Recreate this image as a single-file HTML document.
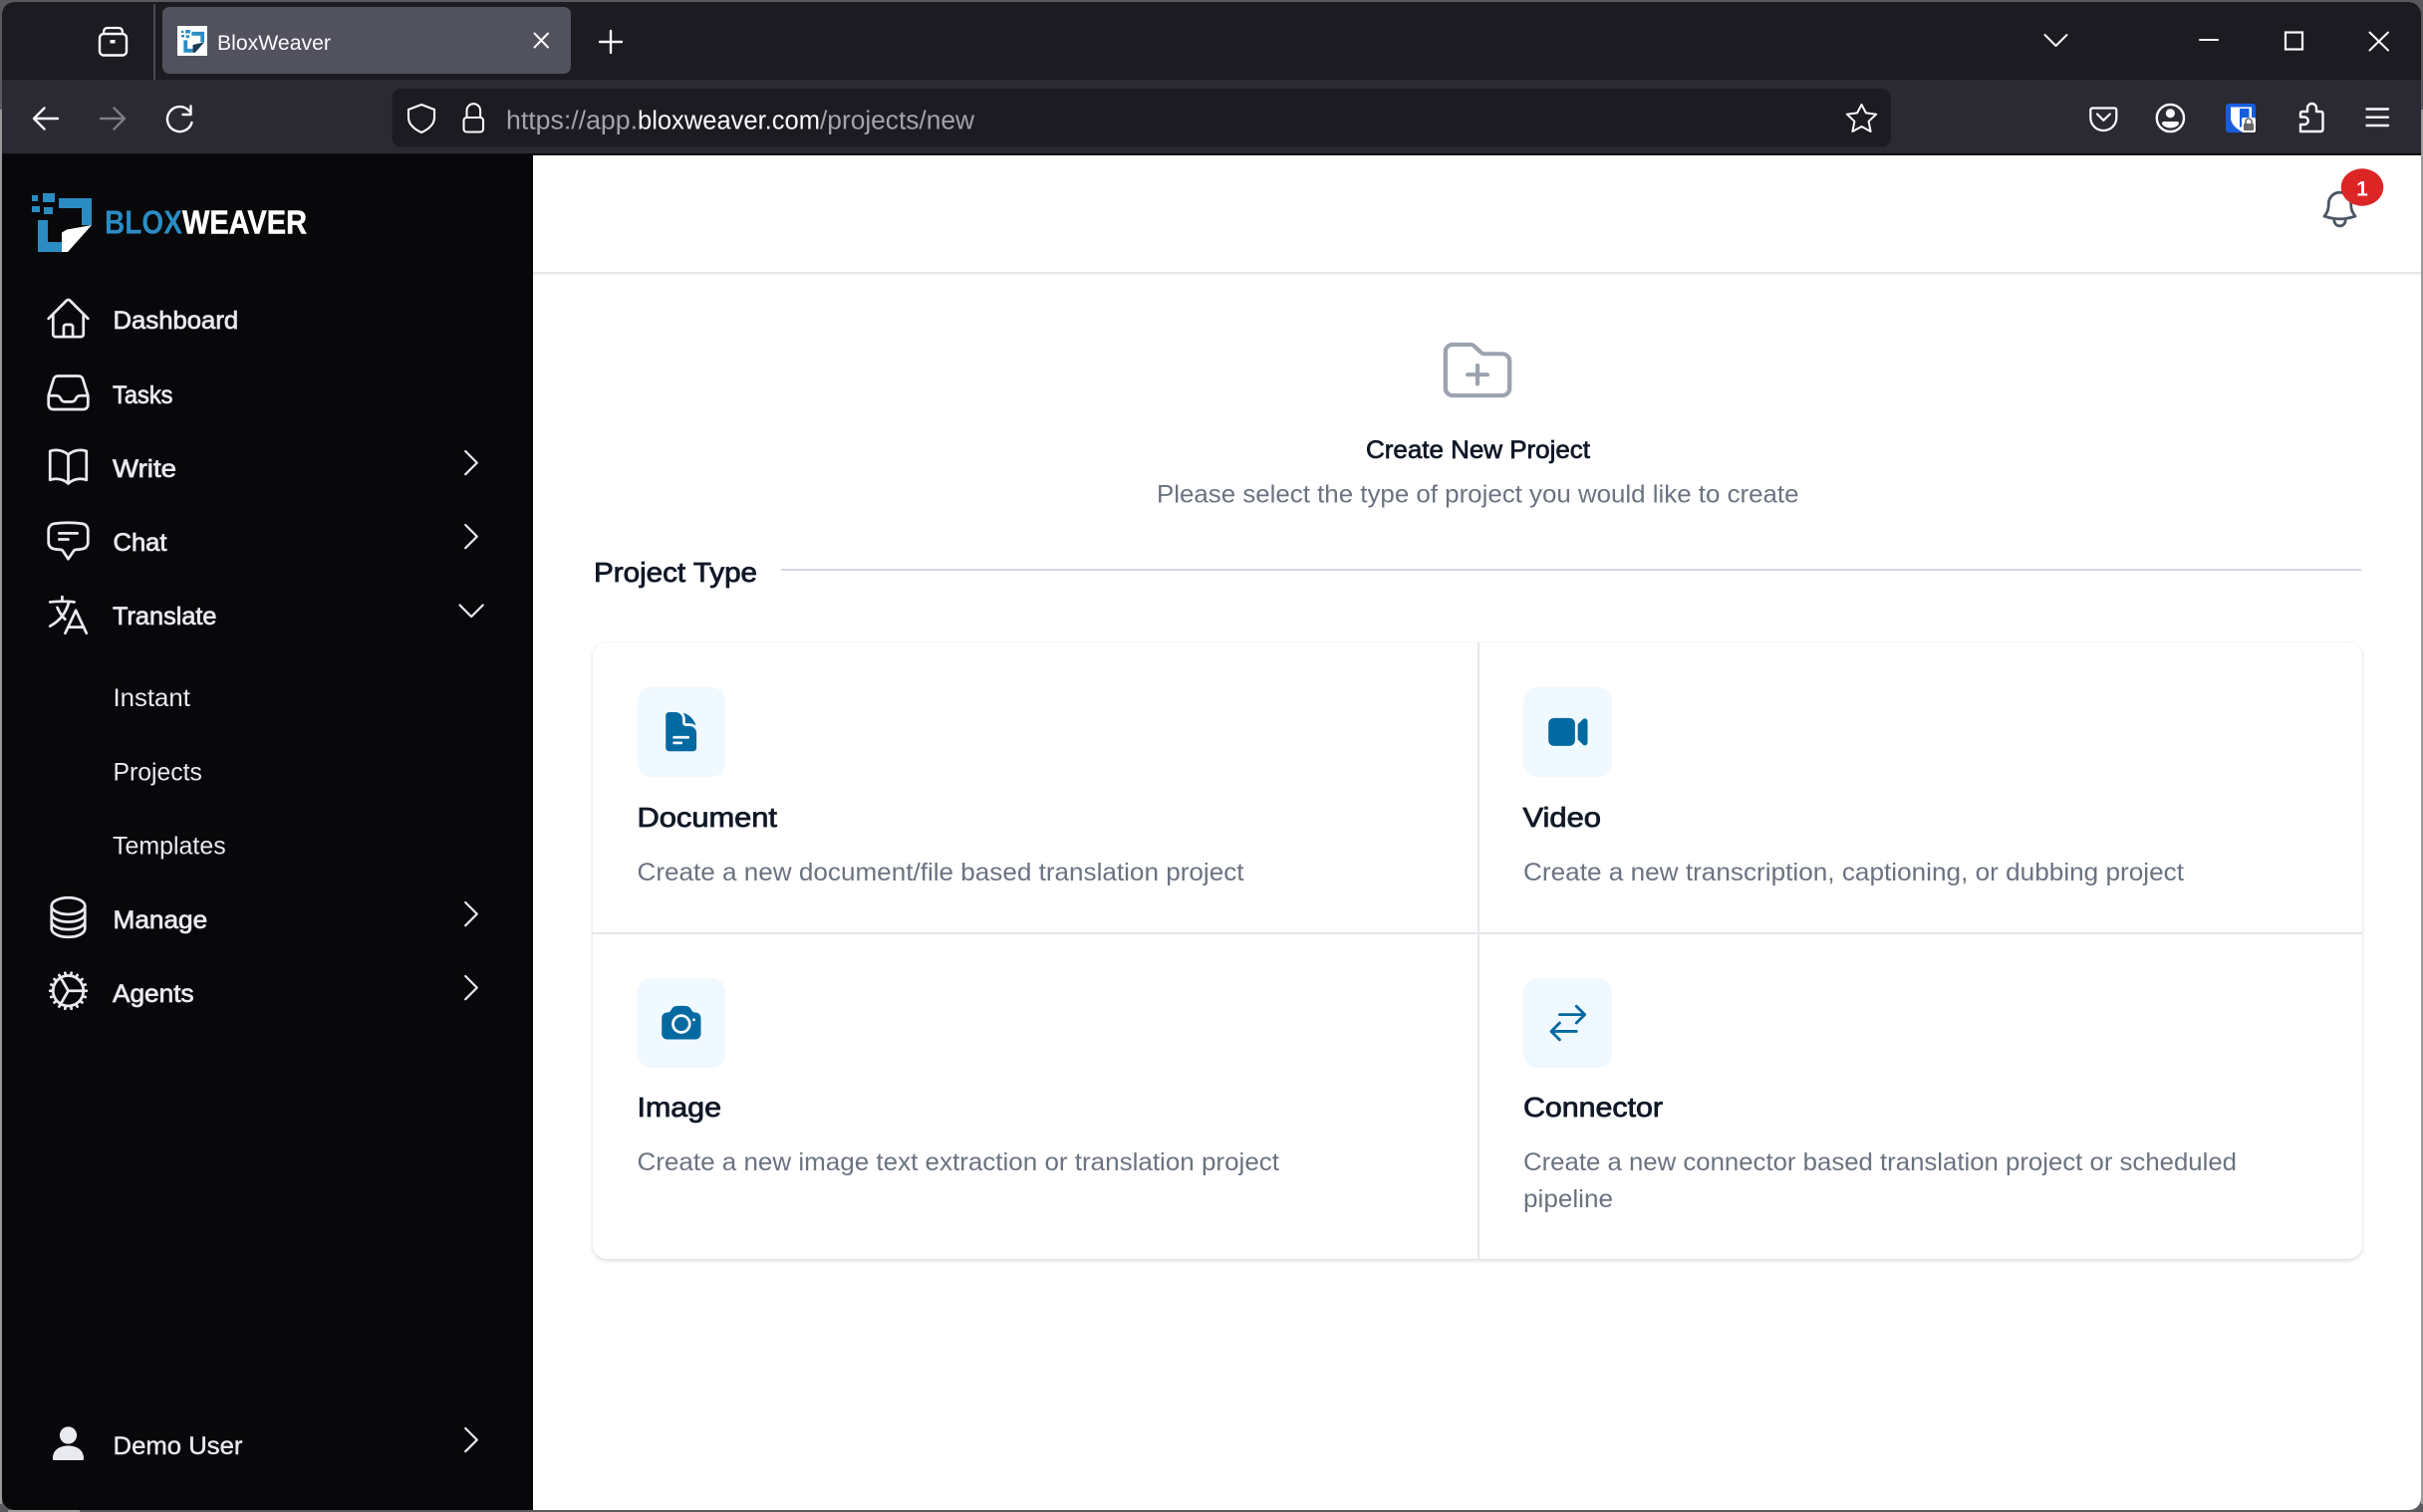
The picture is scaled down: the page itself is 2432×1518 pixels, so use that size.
<!DOCTYPE html>
<html lang="en"><head><meta charset="utf-8"><title>BloxWeaver</title>
<style>
html,body{margin:0;padding:0;width:2432px;height:1518px;overflow:hidden;background:#5a5a5e}
#win{position:absolute;left:2px;top:2px;width:2428px;height:1514px;border-radius:12px;overflow:hidden;background:#fff}
#title{position:absolute;left:0;top:0;width:100%;height:78px;background:#1c1b22}
#tool{position:absolute;left:0;top:78px;width:100%;height:74px;background:#2b2a33;border-bottom:2px solid #0c0c0d}
#side{position:absolute;left:0;top:154px;width:533px;height:1360px;background:#08080a}
#head{position:absolute;left:533px;top:271px;width:1895px;height:2px;background:#e5e7eb;box-shadow:0 1px 2px rgba(0,0,0,.06)}
#cards{position:absolute;left:593px;top:643px;width:1776px;height:619px;border-radius:14px;background:#fff;box-shadow:0 2px 5px rgba(0,0,0,.13),0 0 2px rgba(0,0,0,.06)}
svg{position:absolute;left:0;top:0}
text{font-family:"Liberation Sans",sans-serif}
.s{font-size:24.8px;fill:#e8eaef;stroke:#e8eaef;stroke-width:.7px}
.l{font-size:24.8px;fill:#e8eaef}
.t{font-size:28px;fill:#111827;stroke:#111827;stroke-width:.8px}
.d{font-size:24.8px;fill:#6b7280}
.o{fill:none;stroke:#e8eaef;stroke-width:1.35;stroke-linecap:round;stroke-linejoin:round}
.w{fill:none;stroke:#fbfbfe;stroke-width:2.4;stroke-linecap:round;stroke-linejoin:round}
.tile{fill:#f0f9ff}
.b{fill:#0369a1}
</style></head>
<body>
<div id="win">
<div id="title"></div><div id="tool"></div><div id="side"></div><div id="head"></div><div id="cards"></div>
</div>
<svg width="2432" height="1518" viewBox="0 0 2432 1518" xmlns="http://www.w3.org/2000/svg">
<!-- window edges -->
<rect x="0" y="110" width="2" height="1400" fill="#9a9a9a"/>
<rect x="2430" y="110" width="2" height="1400" fill="#9a9a9a"/>
<rect x="8" y="1516" width="72" height="2" fill="#9a9a9a"/>
<!-- title bar -->
<line x1="155" y1="4" x2="155" y2="80" stroke="#4a4a52" stroke-width="2"/>
<path class="w" style="stroke-width:2.2" d="M104 33c0-3 1-5 4-5h11c3 0 4 2 4 5"/>
<rect class="w" style="stroke-width:2.4" x="100" y="34" width="27" height="21.5" rx="4"/>
<rect x="110.500" y="40" width="5" height="3.500" fill="#fbfbfe"/>
<rect x="163" y="7" width="410" height="67" rx="7" fill="#52525e"/>
<rect x="178" y="26" width="30" height="30" fill="#fff"/>
<g transform="translate(182 30) scale(.385) translate(-32 -194)">
<path fill="#2b8cc4" d="M32 196h6v6h-6zM43 194h12v9H43zM32 207h8v6h-8zM44 208h9v7h-9zM59 199h33v27H82V209H59zM38 221h10v22h14v10H38z"/>
<path fill="#1a3a55" d="M62 233l30-7-24 27H62z"/>
</g>
<text x="218" y="50" font-size="21.500" fill="#fbfbfe" textLength="114" lengthAdjust="spacingAndGlyphs">BloxWeaver</text>
<path class="w" style="stroke-width:2" d="M536.500 33.500l13.500 14M550 33.500l-13.500 14"/>
<path class="w" style="stroke-width:2.400" d="M613 31v22M602 42h22"/>
<path class="w" style="stroke-width:2" d="M2052.500 35l11 11 11-11"/>
<path class="w" style="stroke-width:2" stroke-linecap="butt" d="M2208 40h18"/>
<rect x="2294" y="32.500" width="17" height="17" fill="none" stroke="#fbfbfe" stroke-width="2.200"/>
<path class="w" style="stroke-width:2" d="M2378.500 32.500l18.500 18M2397 32.500l-18.500 18"/>
<!-- toolbar -->
<path class="w" d="M58 119H35M44.500 108.500L34 119l10.500 10.500"/>
<path class="w" style="stroke:#7c7c83" d="M101 119h23M114.500 108.500L125 119l-10.500 10.500"/>
<path class="w" d="M190 111.500A12.500 12.500 0 1 0 192.500 123M191.500 106.500v8.500h-8"/>
<rect x="393.500" y="89" width="1504.500" height="58.500" rx="9" fill="#1c1b22"/>
<path class="w" style="stroke-width:2.100" d="M423 105l-13 5v8c0 7 5.500 11.500 13 15 7.500-3.500 13-8 13-15v-8z"/>
<rect class="w" style="stroke-width:2.100" x="465.500" y="118" width="19.500" height="14.500" rx="3"/>
<path class="w" style="stroke-width:2.100" d="M468.500 118v-7a6.800 6.800 0 0 1 13.600 0v7"/>
<text y="129.500" font-size="25.500"><tspan x="508" fill="#a3a3ab" textLength="132" lengthAdjust="spacingAndGlyphs">https://app.</tspan><tspan x="640" fill="#fbfbfe" textLength="183" lengthAdjust="spacingAndGlyphs">bloxweaver.com</tspan><tspan x="823" fill="#a3a3ab" textLength="155" lengthAdjust="spacingAndGlyphs">/projects/new</tspan></text>
<path class="w" style="stroke-width:2" d="M1868.500 105l4.400 8.400 10.300 1.300-7.600 7.100 2 10.200-9.100-5-9.100 5 2-10.200-7.600-7.100 10.300-1.300z"/>
<path class="w" style="stroke-width:2.200" d="M2100.500 108.500h22q1.800 0 1.800 2.500v7c0 7.500-6 13-13 13s-13-5.500-13-13v-7q0-2.500 2.200-2.500zM2105 114.500l6.300 6.300 6.500-6.300"/>
<circle class="w" cx="2178.400" cy="118.500" r="13.600"/>
<circle cx="2178.400" cy="113.800" r="4.600" fill="#fbfbfe"/>
<path fill="#fbfbfe" d="M2170 124q0-2 2-2h13q2 0 2 2c-1 3-5 4.500-8.500 4.500s-7.500-1.500-8.500-4.500z"/>
<rect x="2234" y="104" width="30" height="29" rx="3" fill="#175ddc"/>
<path fill="#fff" d="M2239 107.500h21v10.500c0 7-6 11-10.500 14-4.500-3-10.500-7-10.500-14z"/>
<path fill="#175ddc" d="M2248 109h9.500v9c0 4-5 8-9.500 10z"/>
<rect x="2250" y="118" width="14" height="15" rx="2" fill="#fff"/>
<rect x="2252" y="124" width="10" height="7" rx="1" fill="#666"/>
<path fill="none" stroke="#666" stroke-width="1.600" d="M2254 124v-2a3 3 0 0 1 6 0v2"/>
<path class="w" d="M2309 132h20q2.500 0 2.500-2.500V114q0-2-2.500-2h-4v-3.500a4.500 4.500 0 0 0-9 0V112h-5q-2 0-2 2v3.500h4a3.700 3.700 0 0 1 0 7.500h-4z"/>
<path class="w" d="M2375.500 109.500h21.500M2375.500 117.700h21.500M2375.500 126h21.500"/>
<!-- logo -->
<g>
<path fill="#2b8cc4" d="M32 196h6v6h-6zM43 194h12v9H43zM32 207h8v6h-8zM44 208h9v7h-9zM59 199h33v27H82V209H59zM38 221h10v22h14v10H38z"/>
<path fill="#fff" d="M62 233.500l5-3 25-4.500-24 27h-6z"/>
</g>
<text x="105" y="234.500" font-size="33" font-weight="700" fill="#2b8cc4" textLength="78" lengthAdjust="spacingAndGlyphs">BLOX</text>
<text x="183" y="234.500" font-size="33" font-weight="700" fill="#fff" stroke="#fff" stroke-width=".5" textLength="125" lengthAdjust="spacingAndGlyphs">WEAVER</text>
<!-- sidebar icons -->
<g transform="translate(44.140 295.440) scale(2.030)"><path class="o" d="M2.250 12l8.954-8.955c.44-.439 1.152-.439 1.591 0L21.750 12M4.500 9.750v10.125c0 .621.504 1.125 1.125 1.125H9.750v-4.875c0-.621.504-1.125 1.125-1.125h2.250c.621 0 1.125.504 1.125 1.125V21h4.125c.621 0 1.125-.504 1.125-1.125V9.750M8.250 21h8.250"/></g>
<g transform="translate(44.140 369.840) scale(2.030)"><path class="o" d="M2.250 13.500h3.860a2.250 2.250 0 012.012 1.244l.256.512a2.250 2.250 0 002.013 1.244h3.218a2.250 2.250 0 002.013-1.244l.256-.512a2.250 2.250 0 012.013-1.244h3.859m-19.500.338V18a2.250 2.250 0 002.250 2.250h15A2.250 2.250 0 0021.750 18v-4.162c0-.224-.034-.447-.1-.661L19.240 5.338a2.250 2.250 0 00-2.150-1.588H6.911a2.250 2.250 0 00-2.150 1.588L2.350 13.177a2.250 2.250 0 00-.1.661z"/></g>
<g transform="translate(44.140 444.240) scale(2.030)"><path class="o" d="M12 6.042A8.967 8.967 0 006 3.750c-1.052 0-2.062.18-3 .512v14.250A8.987 8.987 0 016 18c2.305 0 4.408.867 6 2.292m0-14.250a8.966 8.966 0 016-2.292c1.052 0 2.062.18 3 .512v14.250A8.987 8.987 0 0018 18a8.967 8.967 0 00-6 2.292m0-14.250v14.250"/></g>
<g transform="translate(44.140 518.640) scale(2.030)"><path class="o" d="M7.500 8.250h9m-9 3H12m-9.750 1.510c0 1.600 1.123 2.994 2.707 3.227 1.129.166 2.270.293 3.423.379.350.026.670.210.865.501L12 21l2.755-4.133a1.140 1.140 0 01.865-.501 48.172 48.172 0 003.423-.379c1.584-.233 2.707-1.626 2.707-3.228V6.741c0-1.602-1.123-2.995-2.707-3.228A48.394 48.394 0 0012 3c-2.392 0-4.744.175-7.043.513C3.373 3.746 2.250 5.140 2.250 6.741v6.018z"/></g>
<g transform="translate(44.140 593.040) scale(2.030)"><path class="o" d="M10.500 21l5.250-11.250L21 21m-9-3h7.500M3 5.621a48.474 48.474 0 016-.371m0 0c1.120 0 2.233.038 3.334.114M9 5.250V3m3.334 2.364C11.176 10.658 7.690 15.080 3 17.502m9.334-12.138c.896.061 1.785.147 2.666.257m-4.589 8.495a18.023 18.023 0 01-3.827-5.802"/></g>
<g transform="translate(44.140 896.640) scale(2.030)"><path class="o" d="M20.250 6.375c0 2.278-3.694 4.125-8.250 4.125S3.750 8.653 3.750 6.375m16.500 0c0-2.278-3.694-4.125-8.250-4.125S3.750 4.097 3.750 6.375m16.500 0v11.250c0 2.278-3.694 4.125-8.250 4.125s-8.250-1.847-8.250-4.125V6.375m16.500 0v3.750m-16.500-3.750v3.750m16.500 0v3.750C20.250 16.153 16.556 18 12 18s-8.250-1.847-8.250-4.125v-3.750m16.500 0c0 2.278-3.694 4.125-8.250 4.125s-8.250-1.847-8.250-4.125"/></g>
<g transform="translate(44.140 970.400) scale(2.030)"><path class="o" d="M4.500 12a7.500 7.500 0 0015 0m-15 0a7.500 7.500 0 1115 0m-15 0H3m16.500 0H21m-1.500 0H12m-8.457 3.077l1.410-.513m14.095-5.130l1.410-.513M5.106 17.785l1.150-.964m11.490-9.642l1.149-.964M7.501 19.795l.750-1.300m7.500-12.990l.750-1.300m-6.063 16.658l.260-1.477m2.605-14.772l.260-1.477m0 17.726l-.260-1.477M10.698 4.614l-.260-1.477M16.500 19.794l-.750-1.299M7.500 4.205L12 12m6.894 5.785l-1.149-.964M6.256 7.178l-1.150-.964m15.352 8.864l-1.410-.513M4.954 9.435l-1.410-.514M12.002 12l-3.750 6.495"/></g>
<g transform="translate(-.5 0)">
<circle cx="69" cy="1441" r="8.600" fill="#e8eaef"/>
<path fill="#e8eaef" d="M53.500 1464c0-8 6.500-12.500 15.500-12.500s15.500 4.500 15.500 12.500q.5 2-1.500 2H55q-2 0-1.500-2z"/>
</g>
<!-- chevrons -->
<g style="fill:none;stroke:#e8eaef;stroke-width:2.200;stroke-linecap:round;stroke-linejoin:round">
<path d="M467.200 453l11.600 11.600-11.600 11.600"/>
<path d="M467.200 527l11.600 11.600-11.600 11.600"/>
<path d="M461.500 607.500l11.600 11.600 11.600-11.600"/>
<path d="M467.200 906l11.600 11.600-11.600 11.600"/>
<path d="M467.200 980l11.600 11.600-11.600 11.600"/>
<path d="M467.200 1434l11.600 11.600-11.600 11.600"/>
</g>
<!-- sidebar text -->
<text class="s" x="113.500" y="330" textLength="125.700" lengthAdjust="spacingAndGlyphs">Dashboard</text>
<text class="s" x="113" y="405" textLength="60.500" lengthAdjust="spacingAndGlyphs">Tasks</text>
<text class="s" x="113" y="479" textLength="64" lengthAdjust="spacingAndGlyphs">Write</text>
<text class="s" x="113.500" y="553" textLength="54" lengthAdjust="spacingAndGlyphs">Chat</text>
<text class="s" x="113" y="627" textLength="104.500" lengthAdjust="spacingAndGlyphs">Translate</text>
<text class="l" x="113.500" y="709" textLength="77.400" lengthAdjust="spacingAndGlyphs">Instant</text>
<text class="l" x="113.500" y="783.500" textLength="89.400" lengthAdjust="spacingAndGlyphs">Projects</text>
<text class="l" x="113" y="857.500" textLength="113.700" lengthAdjust="spacingAndGlyphs">Templates</text>
<text class="s" x="113.500" y="932" textLength="94.700" lengthAdjust="spacingAndGlyphs">Manage</text>
<text class="s" x="113" y="1006" textLength="81.600" lengthAdjust="spacingAndGlyphs">Agents</text>
<text class="l" x="113.500" y="1460" stroke="#e8eaef" stroke-width=".4" textLength="130" lengthAdjust="spacingAndGlyphs">Demo User</text>
<!-- bell -->
<g transform="translate(2326.060 187.560) scale(1.870)"><path fill="none" stroke="#4b5563" stroke-width="1.500" stroke-linecap="round" stroke-linejoin="round" d="M14.857 17.082a23.848 23.848 0 005.454-1.310A8.967 8.967 0 0118 9.750v-.7V9A6 6 0 006 9v.750a8.967 8.967 0 01-2.312 6.022c1.733.640 3.560 1.085 5.455 1.310m5.714 0a24.255 24.255 0 01-5.714 0m5.714 0a3 3 0 11-5.714 0"/></g>
<ellipse cx="2371" cy="188" rx="21.300" ry="18.700" fill="#dc2626"/>
<text x="2371" y="196.500" text-anchor="middle" font-size="21" font-weight="700" fill="#fff">1</text>
<!-- intro -->
<g transform="translate(1443.400 334.300) scale(3.300 3.100)"><path fill="none" stroke="#9ca3af" stroke-width="1.300" stroke-linecap="round" stroke-linejoin="round" d="M12 10.500v6m3-3H9m4.060-7.190l-2.120-2.120a1.500 1.500 0 00-1.061-.44H4.500A2.250 2.250 0 002.250 6v12a2.250 2.250 0 002.250 2.250h15A2.250 2.250 0 0021.750 18V9a2.250 2.250 0 00-2.250-2.250h-5.379a1.500 1.500 0 01-1.060-.44z"/></g>
<text x="1371" y="460" font-size="24.800" fill="#111827" stroke="#111827" stroke-width=".7" textLength="225" lengthAdjust="spacingAndGlyphs">Create New Project</text>
<text class="d" x="1161" y="504.500" textLength="644.500" lengthAdjust="spacingAndGlyphs">Please select the type of project you would like to create</text>
<text class="t" x="596" y="584" textLength="164" lengthAdjust="spacingAndGlyphs">Project Type</text>
<rect x="784" y="571" width="1586" height="2" fill="#d1d5db"/>
<!-- card dividers -->
<rect x="1483" y="645" width="2" height="619" fill="#e5e7eb"/>
<rect x="595" y="936" width="1776" height="2" fill="#e5e7eb"/>
<!-- tiles -->
<rect class="tile" x="640" y="690" width="88" height="90" rx="14"/>
<rect class="tile" x="1529" y="690" width="89" height="90" rx="14"/>
<rect class="tile" x="640" y="982" width="88" height="90" rx="14"/>
<rect class="tile" x="1529" y="982" width="89" height="90" rx="14"/>
<g transform="translate(661.200 712.200) scale(1.870)"><path class="b" fill-rule="evenodd" d="M5.625 1.500c-1.036 0-1.875.84-1.875 1.875v17.250c0 1.035.84 1.875 1.875 1.875h12.750c1.035 0 1.875-.84 1.875-1.875V12.750A3.750 3.750 0 0016.500 9h-1.875a1.875 1.875 0 01-1.875-1.875V5.250A3.750 3.750 0 009 1.500H5.625zM7.500 15a.75.75 0 01.75-.75h7.500a.75.75 0 010 1.500h-7.500A.75.75 0 017.500 15zm.75 2.250a.75.75 0 000 1.500H12a.75.75 0 000-1.500H8.250z"/><path class="b" d="M12.971 1.816A5.230 5.230 0 0114.250 5.250v1.875c0 .207.168.375.375.375H16.500a5.230 5.230 0 013.434 1.279 9.768 9.768 0 00-6.963-6.963z"/></g>
<g transform="translate(1551.400 712.400) scale(1.870)"><path class="b" d="M4.500 4.500a3 3 0 00-3 3v9a3 3 0 003 3h8.250a3 3 0 003-3v-9a3 3 0 00-3-3H4.500zM19.940 18.750l-2.690-2.690V7.940l2.690-2.690c.944-.945 2.560-.276 2.560 1.060v11.380c0 1.336-1.616 2.005-2.560 1.060z"/></g>
<g transform="translate(661.400 1004.200) scale(1.870)"><path class="b" d="M12 9a3.750 3.750 0 100 7.500A3.750 3.750 0 0012 9z"/><path class="b" fill-rule="evenodd" d="M9.344 3.071a49.520 49.520 0 015.312 0c.967.052 1.830.585 2.332 1.390l.821 1.317c.24.383.645.643 1.110.71.386.054.77.113 1.152.177 1.432.239 2.429 1.493 2.429 2.909V18a3 3 0 01-3 3H4.500a3 3 0 01-3-3V9.574c0-1.416.997-2.670 2.429-2.909.382-.064.766-.123 1.151-.178a1.560 1.560 0 001.110-.71l.822-1.315a2.942 2.942 0 012.332-1.390zM6.750 12.750a5.250 5.250 0 1110.500 0 5.250 5.250 0 01-10.500 0zm12-1.500a.75.75 0 100-1.500.75.75 0 000 1.500z"/></g>
<g transform="translate(1551.400 1004.600) scale(1.870)"><path fill="none" stroke="#0369a1" stroke-width="1.500" stroke-linecap="round" stroke-linejoin="round" d="M7.500 21L3 16.500m0 0L7.500 12M3 16.500h13.500m0-13.500L21 7.500m0 0L16.500 12M21 7.500H7.500"/></g>
<!-- card text -->
<text class="t" x="639.500" y="830" textLength="140.500" lengthAdjust="spacingAndGlyphs">Document</text>
<text class="d" x="639.500" y="884" textLength="609" lengthAdjust="spacingAndGlyphs">Create a new document/file based translation project</text>
<text class="t" x="1528.500" y="830" textLength="78.500" lengthAdjust="spacingAndGlyphs">Video</text>
<text class="d" x="1529" y="884" textLength="663" lengthAdjust="spacingAndGlyphs">Create a new transcription, captioning, or dubbing project</text>
<text class="t" x="639.500" y="1121" textLength="84.500" lengthAdjust="spacingAndGlyphs">Image</text>
<text class="d" x="639.500" y="1175" textLength="644.500" lengthAdjust="spacingAndGlyphs">Create a new image text extraction or translation project</text>
<text class="t" x="1529" y="1121" textLength="140" lengthAdjust="spacingAndGlyphs">Connector</text>
<text class="d" x="1529" y="1175" textLength="716" lengthAdjust="spacingAndGlyphs">Create a new connector based translation project or scheduled</text>
<text class="d" x="1529" y="1212" textLength="90" lengthAdjust="spacingAndGlyphs">pipeline</text>
</svg>
</body></html>
